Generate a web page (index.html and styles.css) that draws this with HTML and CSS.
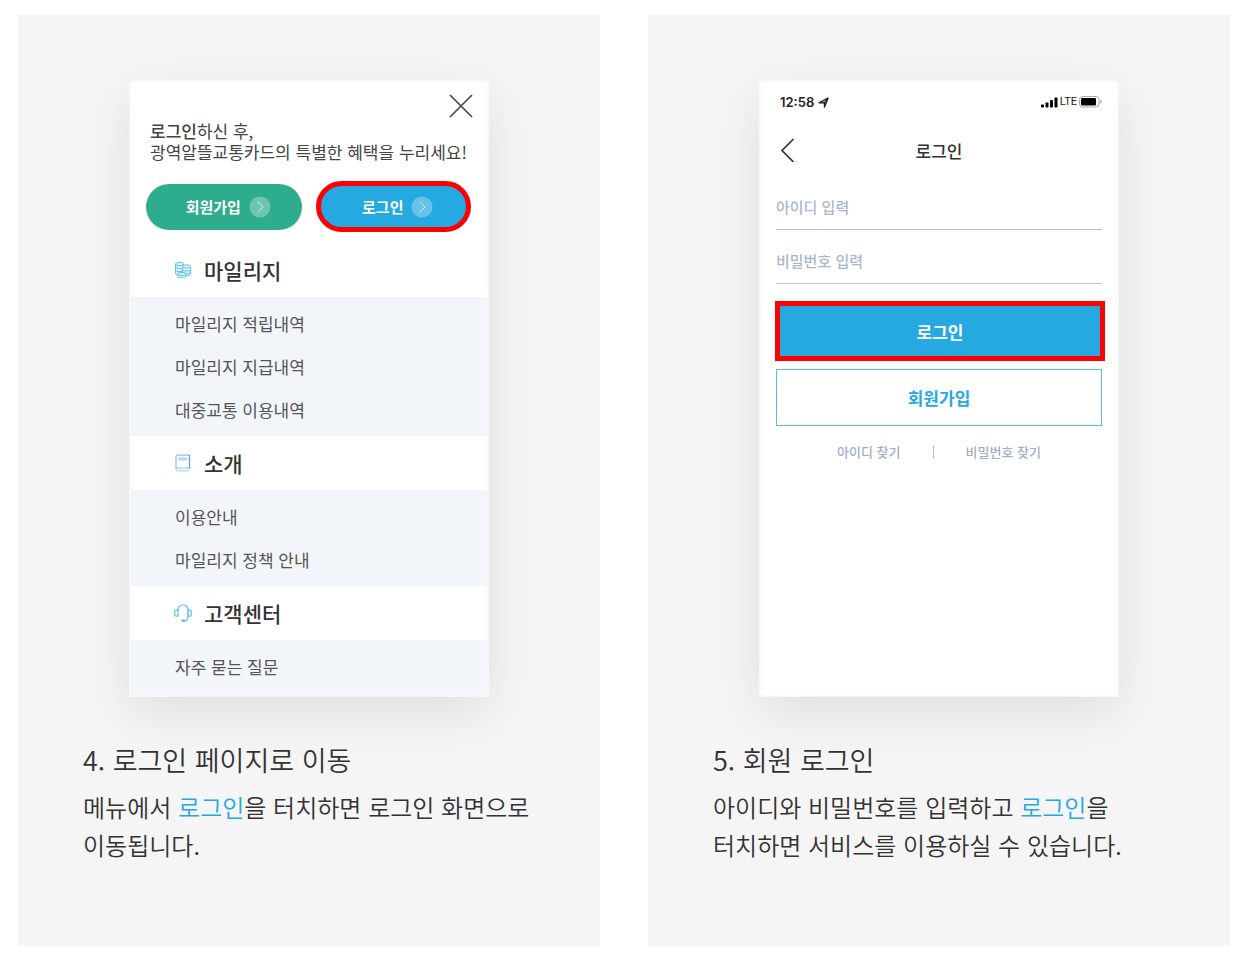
FILE: index.html
```html
<!DOCTYPE html>
<html lang="ko">
<head>
  <meta charset="UTF-8" />
  <meta name="viewport" content="width=device-width, initial-scale=1.0"/>
  <title>로그인 안내</title>
  <link rel="stylesheet" href="styles.css">
</head>
<body>
  <main class="steps">
    <section class="step">
      <div class="phone">
        <div class="menu-top">
          <button type="button" class="close" aria-label="닫기">
            <svg width="24" height="24" viewBox="0 0 24 24" fill="none" stroke="#4a4a4a" stroke-width="1.7"><path d="M1 1l22 22M23 1L1 23"/></svg>
          </button>
          <p class="greeting"><span class="strong">로그인</span>하신 후,</p>
          <p class="greeting">광역알뜰교통카드의 특별한 혜택을 누리세요!</p>
          <div class="pills">
            <button type="button" class="pill join">회원가입
              <svg width="22" height="22" viewBox="0 0 22 22" fill="none"><circle cx="11" cy="11" r="10.5" fill="#fff" fill-opacity=".3"/><path d="M8.500 5.500L14 11l-5.500 5.500" stroke="#fff" stroke-opacity=".8"/></svg>
            </button>
            <button type="button" class="pill login">로그인
              <svg width="22" height="22" viewBox="0 0 22 22" fill="none"><circle cx="11" cy="11" r="10.5" fill="#fff" fill-opacity=".3"/><path d="M8.500 5.500L14 11l-5.500 5.500" stroke="#fff" stroke-opacity=".8"/></svg>
            </button>
          </div>
        </div>

        <h3 class="menu-title">
          <svg width="18" height="18" viewBox="0 0 18 18" fill="#e0f4fd" stroke="#5fc3ec" stroke-width="1">
            <path d="M1.500 3v9c0 1 1.800 1.800 4 1.800s4-.8 4-1.800V3"/><path d="M1.500 6c0 1 1.800 1.600 4 1.600S9.500 7 9.500 6M1.500 9c0 1 1.800 1.600 4 1.600S9.500 10 9.500 9" fill="none"/><ellipse cx="5.500" cy="3" rx="4" ry="1.700"/>
            <path d="M8.500 6v7c0 1 1.800 1.700 4 1.700s4-.7 4-1.700V6"/><path d="M8.500 8.500c0 1 1.800 1.500 4 1.500s4-.5 4-1.500M8.500 11c0 1 1.800 1.500 4 1.500s4-.5 4-1.500" fill="none"/><ellipse cx="12.500" cy="5.500" rx="4" ry="1.600"/>
            <path d="M3.500 13v2c0 1 1.800 1.700 4.300 1.700s4.200-.7 4.200-1.700v-2"/><ellipse cx="7.750" cy="13" rx="4.250" ry="1.600"/>
          </svg>
          마일리지
        </h3>
        <ul class="menu-list">
          <li><a href="#">마일리지 적립내역</a></li>
          <li><a href="#">마일리지 지급내역</a></li>
          <li><a href="#">대중교통 이용내역</a></li>
        </ul>

        <h3 class="menu-title">
          <svg width="18" height="18" viewBox="0 0 18 18" fill="none">
            <path d="M15.500 16.800H3.500a1.500 1.500 0 0 1-1.500-1.500" stroke="#b4d7fb" stroke-width="1.200"/>
            <path d="M2 15.300V3a1.800 1.800 0 0 1 1.800-1.800H15.500V14H3.500A1.400 1.400 0 0 0 2 15.300z" stroke="#8cc0f7" stroke-width="1.200"/>
            <path d="M15.500 1v13.500" stroke="#5ba6f3" stroke-width="1.300"/>
            <rect x="4.500" y="4" width="8.500" height="2" rx="1" fill="#d5e9fd" stroke="#8cc0f7" stroke-width=".8"/>
          </svg>
          소개
        </h3>
        <ul class="menu-list">
          <li><a href="#">이용안내</a></li>
          <li><a href="#">마일리지 정책 안내</a></li>
        </ul>

        <h3 class="menu-title">
          <svg width="18" height="18" viewBox="0 0 18 18" fill="none" stroke="#67c6ee" stroke-width="1.300">
            <path d="M4 6.500V5.800A5 5 0 0 1 9 .8a5 5 0 0 1 5 5v6.700c0 2.500-1.500 4.300-4 4.300"/>
            <path d="M4 5.800v6.400H2.300A1.600 1.600 0 0 1 .7 10.600V7.400a1.600 1.600 0 0 1 1.600-1.600zM14 5.800v6.400h1.700a1.600 1.600 0 0 0 1.600-1.600V7.400a1.600 1.600 0 0 0-1.600-1.600z"/>
            <ellipse cx="9.300" cy="16.700" rx="1.500" ry=".8" fill="#67c6ee"/>
          </svg>
          고객센터
        </h3>
        <ul class="menu-list last">
          <li><a href="#">자주 묻는 질문</a></li>
        </ul>
      </div>

      <div class="caption">
        <h2>4. 로그인 페이지로 이동</h2>
        <p>메뉴에서 <em>로그인</em>을 터치하면 로그인 화면으로<br>이동됩니다.</p>
      </div>
    </section>

    <section class="step">
      <div class="phone">
        <div class="status">
          <span class="time">12:58</span>
          <svg width="11" height="11" viewBox="0 0 11 11" fill="none" stroke="#222" stroke-width="1.400" stroke-linejoin="round"><path d="M1 5.800L10 1.200 6.500 10V5.800z"/><path d="M6.500 5.800L10 1.200"/></svg>
          <span class="signal">
            <svg width="17" height="11" viewBox="0 0 17 11" fill="#000"><rect x="0" y="7.500" width="3" height="3" rx=".8"/><rect x="4.500" y="5.500" width="3" height="5" rx=".8"/><rect x="9" y="3" width="3" height="7.500" rx=".8"/><rect x="13.500" y=".5" width="3" height="10" rx=".8"/></svg>
            <span>LTE</span>
            <svg width="23" height="12" viewBox="0 0 23 12"><rect x=".5" y=".5" width="19.500" height="10.500" rx="3" fill="#fff" stroke="#aaa"/><rect x="2" y="2" width="15" height="7.500" rx="1.200"/><path d="M21.300 3.800c1.600.6 1.600 3.400 0 4z" fill="#999"/></svg>
          </span>
        </div>
        <div class="nav">
          <button type="button" class="back" aria-label="뒤로">
            <svg width="16" height="24" viewBox="0 0 16 24" fill="none" stroke="#333" stroke-width="1.700"><path d="M14.500 1L3 12.500 14.500 24"/></svg>
          </button>
          <h3>로그인</h3>
        </div>
        <form class="login-form">
          <input type="text" placeholder="아이디 입력" aria-label="아이디 입력">
          <input type="password" placeholder="비밀번호 입력" aria-label="비밀번호 입력">
          <button type="button" class="btn btn-login">로그인</button>
          <button type="button" class="btn btn-join">회원가입</button>
          <div class="find">
            <a href="#">아이디 찾기</a>
            <span class="bar"></span>
            <a href="#">비밀번호 찾기</a>
          </div>
        </form>
      </div>

      <div class="caption">
        <h2>5. 회원 로그인</h2>
        <p>아이디와 비밀번호를 입력하고 <em>로그인</em>을<br>터치하면 서비스를 이용하실 수 있습니다.</p>
      </div>
    </section>
  </main>
</body>
</html>
```
FILE: styles.css
```css
* {
  box-sizing: border-box;
}

body {
  margin: 0;
  padding: 15px 30px 21px 18px;
  background: #fff;
  color: #333;
  font-family: "Noto Sans CJK KR", sans-serif;
  word-break: keep-all;
}

h2, h3, p, ul {
  margin: 0;
  padding: 0;
}

button, input {
  font-family: inherit;
}

button {
  padding: 0;
  border: 0;
  background: none;
  cursor: pointer;
}

a {
  color: inherit;
  text-decoration: none;
}

svg {
  display: block;
  flex: none;
}

.steps {
  display: flex;
  gap: 48px;
}

.step {
  flex: 1;
  padding: 65px 40px 82px 65px;
  background: #f5f5f5;
}

.phone {
  display: flex;
  flex-direction: column;
  width: 100%;
  max-width: 360px;
  min-height: 617px;
  margin: 0 auto 0 46px;
  border: 2px solid #f8f8f8;
  background: #fff;
  box-shadow: 0 16px 48px rgba(0, 0, 0, 0.09);
}

/* Side menu */
.menu-top {
  padding: 12px 14px 11px 15px;
}

.close {
  display: block;
  margin: 0 0 2px auto;
}

.greeting {
  padding-left: 4px;
  font-size: 17px;
  line-height: 21px;
  color: #444;
  white-space: nowrap;
}

.greeting .strong {
  font-weight: 500;
}

.pills {
  display: grid;
  grid-template-columns: 1fr 1fr;
  align-items: center;
  gap: 14px;
  margin: 19px 2px 0 0;
}

.pill {
  display: flex;
  align-items: center;
  justify-content: center;
  gap: 8px;
  height: 46px;
  padding-left: 9px;
  border-radius: 26px;
  color: #fff;
  font-size: 15px;
  font-weight: 700;
}

.join {
  background: #2ead8e;
}

.login {
  height: 51px;
  border: 5px solid #f00;
  background: #26a8e1;
}

.menu-title {
  display: flex;
  align-items: center;
  gap: 12px;
  height: 54px;
  padding-left: 43px;
  color: #333;
  font-size: 21px;
  font-weight: 500;
}

.menu-list {
  padding: 5px 0 5px 44px;
  background: #f2f5fa;
  color: #555;
  font-size: 17px;
  line-height: 43px;
  list-style: none;
}

.menu-list.last {
  flex: 1;
}

/* Login screen */
.status {
  display: flex;
  align-items: center;
  gap: 4px;
  padding: 11px 15px 0 19px;
  color: #222;
  font: 600 13px/18px Inter, sans-serif;
}

.signal {
  display: flex;
  align-items: center;
  gap: 2px;
  margin-left: auto;
  font-family: Roboto, sans-serif;
  font-size: 11px;
  font-weight: 400;
}

.nav {
  display: grid;
  grid-template-columns: 24px 1fr 24px;
  align-items: center;
  height: 40px;
  margin-top: 19px;
  padding: 0 18px;
}

.nav h3 {
  font-size: 17px;
  font-weight: 500;
  text-align: center;
}

.login-form {
  display: flex;
  flex-direction: column;
  padding: 10px 15px;
}

.login-form input {
  width: 100%;
  height: 50px;
  margin-bottom: 4px;
  padding: 4px 0 0;
  border: 0;
  border-bottom: 1px solid #b5bfd3;
  background: none;
  font-size: 15px;
  outline: none;
}

.login-form input::placeholder {
  color: #a9b6cd;
  font-weight: 500;
}

.btn {
  height: 57px;
  font-size: 17px;
  font-weight: 700;
}

.btn-login {
  height: 60px;
  margin: 13px -3px 8px -1px;
  border: 5px solid #f00;
  background: #26a8e1;
  color: #fff;
}

.btn-join {
  border: 1px solid #5cbbe7;
  color: #26a8e1;
}

.find {
  display: flex;
  align-items: center;
  justify-content: center;
  gap: 32px;
  margin-top: 16px;
  color: #a3aec3;
  font-size: 13px;
  font-weight: 500;
  line-height: 20px;
}

.find .bar {
  width: 1px;
  height: 14px;
  background: #b5bfd3;
}

/* Text under each phone */
.caption {
  margin-top: 43px;
}

.caption h2 {
  font-size: 27px;
  font-weight: 350;
  line-height: 40px;
}

.caption p {
  margin-top: 8px;
  font-size: 24px;
  font-weight: 350;
  line-height: 38px;
}

.caption em {
  color: #26a8e1;
  font-style: normal;
}
```
